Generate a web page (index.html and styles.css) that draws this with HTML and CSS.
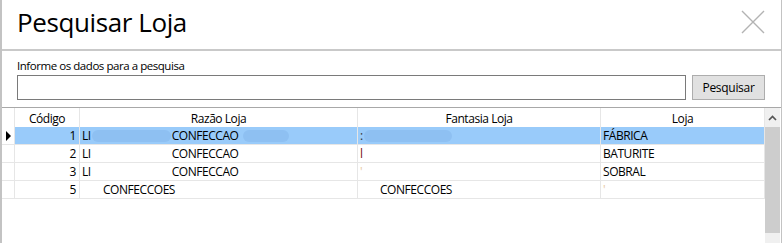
FILE: index.html
```html
<!DOCTYPE html>
<html lang="pt">
<head>
<meta charset="utf-8">
<title>Pesquisar Loja</title>
<link rel="stylesheet" href="styles.css">
</head>
<body>
<div class="window">
  <div class="titlebar">
    <h1 class="title">Pesquisar Loja</h1>
    <span class="close">
      <svg width="24" height="24" viewBox="0 0 24 24"><path d="M1 1 L23 23 M23 1 L1 23" stroke="#b3b3b3" stroke-width="1.4" fill="none"/></svg>
    </span>
  </div>
  <div class="search">
    <label class="label">Informe os dados para a pesquisa</label>
    <div class="search-row">
      <input class="input" type="text">
      <button class="btn">Pesquisar</button>
    </div>
  </div>
  <div class="grid">
    <div class="table">
      <div class="row head">
        <div class="cell rh"></div>
        <div class="cell c-cod center">Código</div>
        <div class="cell center">Razão Loja</div>
        <div class="cell center">Fantasia Loja</div>
        <div class="cell center">Loja</div>
      </div>
      <div class="row sel">
        <div class="cell rh"><span class="arrow"></span></div>
        <div class="cell c-cod num">1</div>
        <div class="cell"><span>LI</span><span class="red r1"></span><span>CONFECCAO</span><span class="red r2"></span></div>
        <div class="cell"><span class="mark dark">:</span><span class="red f1"></span></div>
        <div class="cell">FÁBRICA</div>
      </div>
      <div class="row">
        <div class="cell rh"></div>
        <div class="cell c-cod num">2</div>
        <div class="cell"><span>LI</span><span class="red r1"></span><span>CONFECCAO</span></div>
        <div class="cell"><span class="mark maroon">l</span></div>
        <div class="cell">BATURITE</div>
      </div>
      <div class="row">
        <div class="cell rh"></div>
        <div class="cell c-cod num">3</div>
        <div class="cell"><span>LI</span><span class="red r1"></span><span>CONFECCAO</span></div>
        <div class="cell"><span class="mark faint">'</span></div>
        <div class="cell">SOBRAL</div>
      </div>
      <div class="row">
        <div class="cell rh"></div>
        <div class="cell c-cod num">5</div>
        <div class="cell"><span class="red r4"></span><span>CONFECCOES</span></div>
        <div class="cell"><span class="red f4"></span><span>CONFECCOES</span></div>
        <div class="cell"><span class="mark faint">'</span></div>
      </div>
    </div>
    <div class="scrollbar">
      <div class="sb-up">
        <svg width="9" height="6" viewBox="0 0 9 6"><path d="M1 5 L4.5 1.5 L8 5" stroke="#555" stroke-width="1.7" fill="none"/></svg>
      </div>
      <div class="sb-thumb"></div>
      <div class="sb-track"></div>
    </div>
  </div>
</div>
</body>
</html>
```

FILE: styles.css
```css
* { box-sizing: border-box; }
html, body { margin: 0; padding: 0; background: #ffffff; }
body {
  width: 783px;
  height: 243px;
  overflow: hidden;
  font-family: "Open Sans", "Noto Sans", sans-serif;
  color: #000;
}
.window {
  width: 782px;
  height: 243px;
  border-left: 2px solid #c3c3c3;
  border-right: 1px solid #c3c3c3;
  display: flex;
  flex-direction: column;
  background: #fff;
}
.titlebar {
  height: 51px;
  flex: none;
  border-bottom: 2px solid #c9c9c9;
  display: flex;
  align-items: flex-start;
  justify-content: space-between;
}
.title {
  margin: 0;
  padding: 5px 0 0 15px;
  font-size: 26px;
  font-weight: 400;
  line-height: 35px;
  letter-spacing: -0.4px;
  color: #000;
}
.close {
  display: flex;
  margin: 10px 16px 0 0;
}
.search {
  height: 56px;
  flex: none;
  padding: 7px 16px 0 15px;
  display: flex;
  flex-direction: column;
}
.label {
  font-size: 11.5px;
  line-height: 16px;
  letter-spacing: -0.45px;
  margin-bottom: 1px;
}
.search-row {
  display: flex;
  gap: 6px;
}
.input {
  flex: 1;
  height: 25px;
  border: 1px solid #7a7a7a;
  margin: 0;
  padding: 0 3px;
  font: inherit;
  outline: none;
}
.btn {
  width: 73px;
  height: 25px;
  margin: 0;
  padding: 0;
  background: #e1e1e1;
  border: 1px solid #adadad;
  font-family: inherit;
  font-size: 12px;
  letter-spacing: -0.3px;
  color: #000;
}
.grid {
  flex: 1;
  border-top: 1px solid #a8a8a8;
  display: flex;
  min-height: 0;
}
.table {
  width: 763px;
  flex: none;
  display: flex;
  flex-direction: column;
}
.row {
  display: grid;
  grid-template-columns: 13px 65px 278px 243px 164px;
  height: 18px;
  font-size: 12px;
  letter-spacing: -0.45px;
}
.row.head { height: 19px; }
.cell {
  border-right: 1px solid #e6e6e6;
  border-bottom: 1px solid #e6e6e6;
  padding: 0 2px;
  line-height: 17px;
  white-space: nowrap;
  overflow: hidden;
  display: flex;
  align-items: center;
}
.head .cell { border-bottom: none; line-height: 19px; padding-top: 1px; }
.center { justify-content: center; }
.num { justify-content: flex-end; padding-right: 3px; }
.rh { padding: 0; justify-content: center; }
.sel .cell { background: #99cbfa; }
.sel .cell.rh { background: #fff; }
.arrow {
  width: 0;
  height: 0;
  border-top: 5px solid transparent;
  border-bottom: 5px solid transparent;
  border-left: 5px solid #000;
  margin-left: 1px;
}
.red {
  display: inline-block;
  height: 12px;
  border-radius: 7px;
  flex: none;
}
.sel .red { background: #8ec0f2; filter: blur(0.6px); }
.r1 { width: 79px; margin: 0 1px 0 1px; }
.r2 { width: 46px; margin-left: 4px; }
.r4 { width: 21px; }
.f1 { width: 88px; }
.f4 { width: 20px; }
.mark { display: inline-block; width: 4px; }
.dark { color: #333; }
.maroon { color: #7a1010; }
.faint { color: #e8c8a0; }
.scrollbar {
  width: 16px;
  flex: none;
  display: flex;
  flex-direction: column;
}
.sb-up {
  width: 15px;
  height: 19px;
  display: flex;
  align-items: center;
  justify-content: center;
  background: #f0f0f0;
}
.sb-thumb {
  width: 15px;
  height: 106px;
  background: #cdcdcd;
}
.sb-track {
  width: 15px;
  flex: 1;
  background: #f0f0f0;
}
```
